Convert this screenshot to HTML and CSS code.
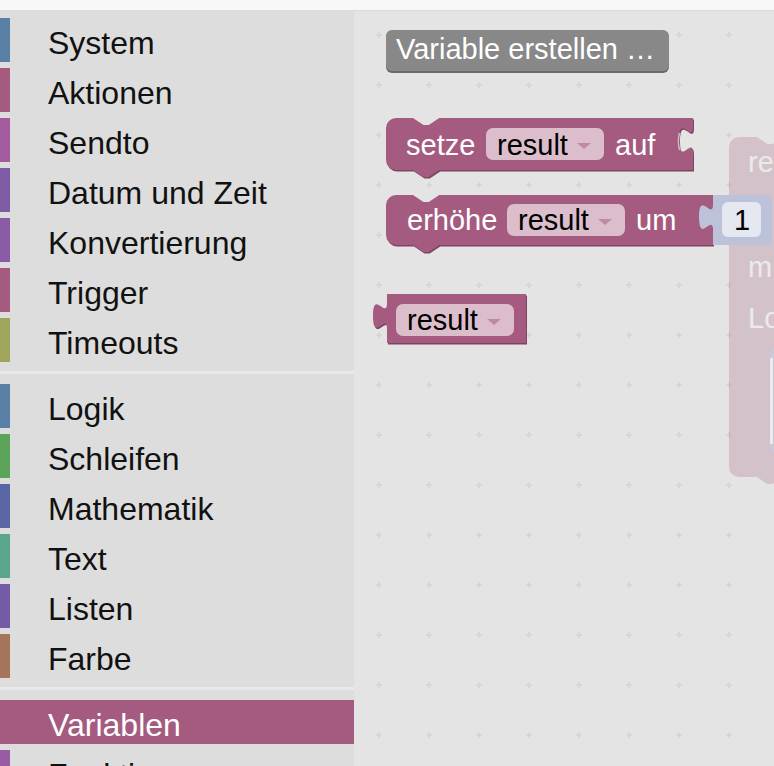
FILE: index.html
```html
<!DOCTYPE html>
<html lang="de">
<head>
    <meta charset="UTF-8">
    <meta name="viewport" content="width=device-width, initial-scale=1.0">
    <title>Blockly Editor</title>
    <link rel="stylesheet" href="styles.css">
</head>
<body>
    <div class="topbar"></div>

    <div class="editor">
        <nav class="toolbox">
            <div class="category"><div class="item"><span class="swatch c-system"></span><span class="label">System</span></div></div>
            <div class="category"><div class="item"><span class="swatch c-action"></span><span class="label">Aktionen</span></div></div>
            <div class="category"><div class="item"><span class="swatch c-sendto"></span><span class="label">Sendto</span></div></div>
            <div class="category"><div class="item"><span class="swatch c-date"></span><span class="label">Datum und Zeit</span></div></div>
            <div class="category"><div class="item"><span class="swatch c-convert"></span><span class="label">Konvertierung</span></div></div>
            <div class="category"><div class="item"><span class="swatch c-action"></span><span class="label">Trigger</span></div></div>
            <div class="category"><div class="item"><span class="swatch c-timeout"></span><span class="label">Timeouts</span></div></div>

            <div class="separator"></div>

            <div class="category"><div class="item"><span class="swatch c-system"></span><span class="label">Logik</span></div></div>
            <div class="category"><div class="item"><span class="swatch c-loop"></span><span class="label">Schleifen</span></div></div>
            <div class="category"><div class="item"><span class="swatch c-math"></span><span class="label">Mathematik</span></div></div>
            <div class="category"><div class="item"><span class="swatch c-text"></span><span class="label">Text</span></div></div>
            <div class="category"><div class="item"><span class="swatch c-list"></span><span class="label">Listen</span></div></div>
            <div class="category"><div class="item"><span class="swatch c-colour"></span><span class="label">Farbe</span></div></div>

            <div class="separator"></div>

            <div class="category selected"><div class="item"><span class="swatch c-action"></span><span class="label">Variablen</span></div></div>
            <div class="category"><div class="item"><span class="swatch c-func"></span><span class="label">Funktionen</span></div></div>
        </nav>

        <main class="workspace">
            <svg class="canvas" viewBox="354 11 420 755" width="420" height="755">
                <defs>
                    <pattern id="grid" x="354" y="10" width="50" height="50" patternUnits="userSpaceOnUse">
                        <path d="M22 25 H28 M25 22 V28" stroke="#d5d5d5" stroke-width="1.5"/>
                    </pattern>
                </defs>
                <rect x="354" y="11" width="420" height="755" fill="url(#grid)"/>

                <!-- faded block in the background -->
                <g class="ghost">
                    <path class="blk" d="M729,147 a10,10 0 0 1 10,-10 H757 l10.5,7 5.25,0 10.5,-7 H800 V477 H783 l-10.5,7 -5.25,0 -10.5,-7 H739 a10,10 0 0 1 -10,-10 Z"/>
                    <text class="lbl" x="748" y="172">re</text>
                    <text class="lbl" x="748" y="277">m</text>
                    <text class="lbl" x="748" y="328">Lo</text>
                </g>
                <rect x="770" y="347" width="40" height="108" rx="10" fill="#c6cbd8"/>
                <path d="M771.5,358 V444" stroke="#eef0f4" stroke-width="2.5"/>

                <!-- Variable erstellen button -->
                <rect x="386" y="32" width="283" height="41" rx="6" fill="#6a6a6a"/>
                <rect x="386" y="30" width="283" height="41" rx="6" fill="#888888"/>
                <text class="lbl" x="396" y="59">Variable erstellen …</text>

                <!-- setze result auf -->
                <path class="blk-dark" transform="translate(1,1.5)" d="M386,128 a10,10 0 0 1 10,-10 H413 l10.5,7 5.25,0 10.5,-7 H693 v8.75 c0,17.5 -14,-14 -14,13.125 s14,-4.375 14,13.125 V170 H439.25 l-10.5,7 -5.25,0 -10.5,-7 H396 a10,10 0 0 1 -10,-10 Z"/>
                <path class="blk" d="M386,128 a10,10 0 0 1 10,-10 H413 l10.5,7 5.25,0 10.5,-7 H693 v8.75 c0,17.5 -14,-14 -14,13.125 s14,-4.375 14,13.125 V170 H439.25 l-10.5,7 -5.25,0 -10.5,-7 H396 a10,10 0 0 1 -10,-10 Z"/>
                <path d="M679.5,133 c-1.5,6 -1.5,11 0,17" stroke="#d9b7c8" stroke-width="1.5" fill="none"/>
                <text class="lbl" x="406" y="155">setze</text>
                <rect class="field" x="486" y="128" width="118" height="32" rx="7"/>
                <text class="val" x="497" y="155">result</text>
                <path class="arrow" d="M577,143 H591 L584,149 Z"/>
                <text class="lbl" x="615" y="155">auf</text>

                <!-- erhöhe result um 1 -->
                <path class="blk-dark" transform="translate(1,1.5)" d="M386,205 a10,10 0 0 1 10,-10 H413 l10.5,7 5.25,0 10.5,-7 H713 v8.75 c0,17.5 -14,-14 -14,13.125 s14,-4.375 14,13.125 V245 H439.25 l-10.5,7 -5.25,0 -10.5,-7 H396 a10,10 0 0 1 -10,-10 Z"/>
                <path class="blk" d="M386,205 a10,10 0 0 1 10,-10 H413 l10.5,7 5.25,0 10.5,-7 H713 v8.75 c0,17.5 -14,-14 -14,13.125 s14,-4.375 14,13.125 V245 H439.25 l-10.5,7 -5.25,0 -10.5,-7 H396 a10,10 0 0 1 -10,-10 Z"/>
                <text class="lbl" x="407" y="230">erhöhe</text>
                <rect class="field" x="507" y="204" width="118" height="32" rx="7"/>
                <text class="val" x="518" y="230">result</text>
                <path class="arrow" d="M598,219 H612 L605,225 Z"/>
                <text class="lbl" x="636" y="230">um</text>

                <path class="num" d="M713,195 H769 a3,3 0 0 1 3,3 V242 a3,3 0 0 1 -3,3 H713 V230 c0,-17.5 -14,14 -14,-13.125 s14,4.375 14,-13.125 Z"/>
                <rect class="num-field" x="722" y="202" width="39" height="35" rx="6"/>
                <text class="val" x="734" y="230">1</text>

                <!-- result getter -->
                <path class="blk-dark" transform="translate(1,1.5)" d="M387,294 H526 V343 H387 V329 c0,-17.5 -14,14 -14,-13.125 s14,4.375 14,-13.125 Z"/>
                <path class="blk" d="M387,294 H526 V343 H387 V329 c0,-17.5 -14,14 -14,-13.125 s14,4.375 14,-13.125 Z"/>
                <rect class="field" x="396" y="304" width="118" height="32" rx="7"/>
                <text class="val" x="407" y="330">result</text>
                <path class="arrow" d="M487,319 H501 L494,325 Z"/>
            </svg>
        </main>
    </div>
</body>
</html>
```

FILE: styles.css
```css
* {
    margin: 0;
    padding: 0;
    box-sizing: border-box;
}

html, body {
    height: 100%;
    overflow: hidden;
}

body {
    font-family: "Liberation Sans", Arial, sans-serif;
    background-color: #e4e4e4;
    color: #111;
}

.topbar {
    height: 11px;
    background-color: #f8f8f8;
    border-bottom: 1px solid #dcdcdc;
}

.editor {
    display: flex;
    height: 755px;
}

.toolbox {
    width: 354px;
    flex-shrink: 0;
    background-color: #dddddd;
    padding-top: 4px;
}

.category {
    height: 50px;
    padding: 3px 0;
}

.item {
    display: flex;
    height: 44px;
}

.swatch {
    width: 10px;
    height: 44px;
}

.label {
    padding-left: 38px;
    padding-top: 5px;
    font-size: 32px;
    line-height: 40px;
}

.category.selected .item {
    background-color: #a55b80;
    color: #fff;
}

.separator {
    height: 3px;
    margin: 6px 0 7px;
    background-color: #e9e9e9;
}

.c-system { background-color: #5b80a5; }
.c-action { background-color: #a55b80; }
.c-sendto { background-color: #a55b9f; }
.c-date { background-color: #805ba5; }
.c-convert { background-color: #8c5ba5; }
.c-timeout { background-color: #9fa55b; }
.c-loop { background-color: #5ba55b; }
.c-math { background-color: #5b67a5; }
.c-text { background-color: #5ba58c; }
.c-list { background-color: #745ba5; }
.c-colour { background-color: #a5745b; }
.c-func { background-color: #995ba5; }

.workspace {
    flex: 1;
    position: relative;
    background-color: #e4e4e4;
}

.canvas {
    position: absolute;
    top: 0;
    left: 0;
    display: block;
}

.canvas text {
    font-family: "Liberation Sans", Arial, sans-serif;
    font-size: 29px;
}

.canvas .lbl {
    fill: #fff;
}

.canvas .val {
    fill: #000;
}

.blk {
    fill: #a55b80;
}

.blk-dark {
    fill: #7f4462;
}

.field {
    fill: #dbbdcc;
}

.arrow {
    fill: #c08aa5;
}

.num {
    fill: #bdc2db;
}

.num-field {
    fill: #e5e7f1;
}

.ghost {
    opacity: 0.24;
}
```
